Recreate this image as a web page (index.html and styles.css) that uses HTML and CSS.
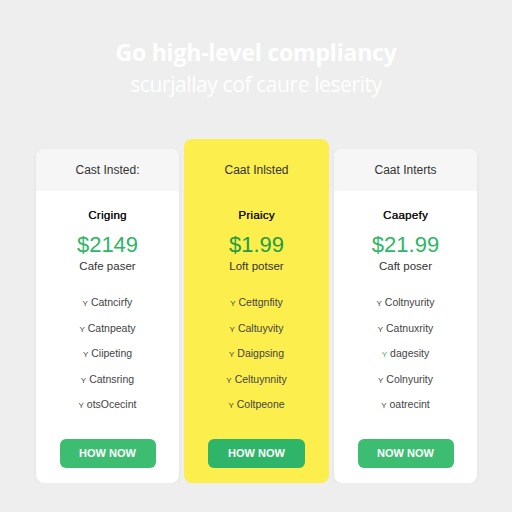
FILE: index.html
```html
<!DOCTYPE html>
<html>
<head>
<meta charset="utf-8">
<link rel="stylesheet" href="styles.css">
</head>
<body>
<div class="hero">
  <h1 class="title">Go high-level compliancy</h1>
  <p class="subtitle">scurjallay cof caure leserity</p>
</div>
<div class="plans">
  <div class="card">
    <div class="card-head">Cast Insted:</div>
    <div class="card-body">
      <div class="plan">Criging</div>
      <div class="price">$2149</div>
      <div class="per">Cafe paser</div>
      <ul class="features">
        <li><span class="tick">Y</span>Catncirfy</li>
        <li><span class="tick">Y</span>Catnpeaty</li>
        <li><span class="tick">Y</span>Ciipeting</li>
        <li><span class="tick">Y</span>Catnsring</li>
        <li><span class="tick">Y</span>otsOcecint</li>
      </ul>
      <div class="btn">HOW NOW</div>
    </div>
  </div>
  <div class="card featured">
    <div class="card-head">Caat Inlsted</div>
    <div class="card-body">
      <div class="plan">Priaicy</div>
      <div class="price">$1.99</div>
      <div class="per">Loft potser</div>
      <ul class="features">
        <li><span class="tick">Y</span>Cettgnfity</li>
        <li><span class="tick">Y</span>Caltuyvity</li>
        <li><span class="tick">Y</span>Daigpsing</li>
        <li><span class="tick">Y</span>Celtuynnity</li>
        <li><span class="tick">Y</span>Coltpeone</li>
      </ul>
      <div class="btn">HOW NOW</div>
    </div>
  </div>
  <div class="card">
    <div class="card-head">Caat Interts</div>
    <div class="card-body">
      <div class="plan">Caapefy</div>
      <div class="price">$21.99</div>
      <div class="per">Caft poser</div>
      <ul class="features">
        <li><span class="tick">Y</span>Coltnyurity</li>
        <li><span class="tick">Y</span>Catnuxrity</li>
        <li><span class="tick green">Y</span>dagesity</li>
        <li><span class="tick">Y</span>Colnyurity</li>
        <li><span class="tick">Y</span>oatrecint</li>
      </ul>
      <div class="btn">NOW NOW</div>
    </div>
  </div>
</div>
</body>
</html>
```

FILE: styles.css
```css
html, body {
  margin: 0;
  padding: 0;
  background: #eeeeee;
  font-family: "Liberation Sans", Arial, sans-serif;
  color: #333;
}
.hero {
  text-align: center;
  padding-top: 37px;
  height: 102px;
  box-sizing: border-box;
}
.title {
  margin: 0;
  font-family: "Open Sans", sans-serif;
  font-weight: 700;
  font-size: 23px;
  line-height: 30px;
  color: #ffffff;
  letter-spacing: -0.2px;
}
.subtitle {
  margin: 2px 0 0;
  font-family: "Open Sans", sans-serif;
  font-weight: 400;
  font-size: 21px;
  line-height: 30px;
  color: #ffffff;
  letter-spacing: -0.4px;
}
.plans {
  display: flex;
  justify-content: center;
  align-items: flex-end;
  gap: 5px;
  padding-left: 1px;
  height: 381px;
}
.card {
  width: 143px;
  height: 334px;
  background: #ffffff;
  border-radius: 8px;
  box-shadow: 0 1px 4px rgba(0,0,0,0.05);
  overflow: hidden;
  display: flex;
  flex-direction: column;
}
.card-head {
  height: 42px;
  background: #f6f6f6;
  display: flex;
  align-items: center;
  justify-content: center;
  font-size: 12px;
  color: #333;
  flex-shrink: 0;
}
.featured {
  width: 145px;
  height: 344px;
  background: #fcee4c;
  box-shadow: none;
}
.featured .card-head {
  background: transparent;
  height: 52px;
  padding-top: 10px;
  box-sizing: border-box;
}
.card-body {
  display: flex;
  flex-direction: column;
  align-items: center;
  padding-top: 16px;
}
.plan {
  font-size: 11.5px;
  line-height: 16px;
  font-weight: 400;
  color: #111;
  letter-spacing: 0.3px;
  text-shadow: 0.3px 0 0 #111;
}
.price {
  margin-top: 9px;
  font-size: 22px;
  line-height: 26px;
  color: #2db665;
}
.featured .price {
  color: #1f9d44;
}
.per {
  margin-top: 1px;
  font-size: 11.5px;
  line-height: 14px;
  color: #333;
}
.features {
  list-style: none;
  margin: 17px 0 0;
  padding: 0;
  text-align: center;
}
.features li {
  font-size: 10.5px;
  line-height: 25.5px;
  height: 25.5px;
  color: #444;
}
.tick {
  font-size: 8px;
  line-height: 1;
  margin-right: 3px;
  color: #444;
}
.tick.green {
  color: #2db665;
}
.btn {
  margin-top: 21px;
  width: 96px;
  height: 29px;
  border-radius: 6px;
  background: #3dbd72;
  color: #ffffff;
  font-weight: 700;
  font-size: 11px;
  display: flex;
  align-items: center;
  justify-content: center;
}
.featured .btn {
  width: 97px;
  background: #2fb56a;
}
```
